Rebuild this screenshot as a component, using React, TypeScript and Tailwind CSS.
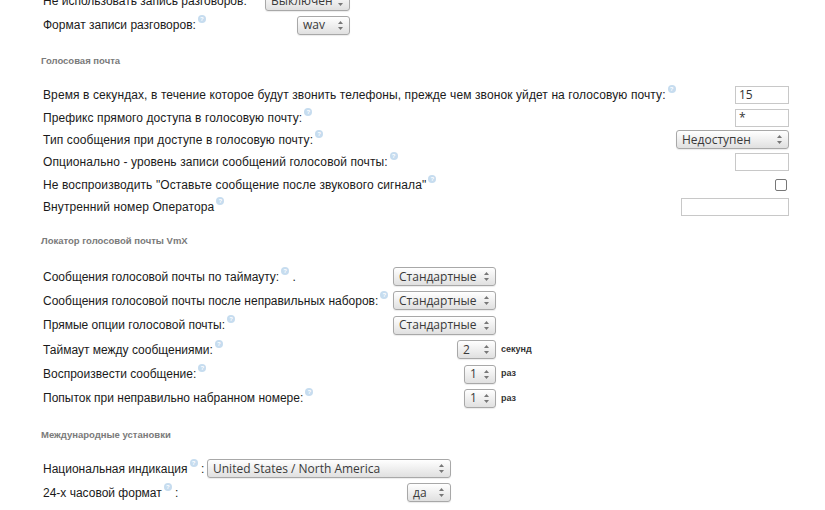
import React from 'react';

function Help() {
  return (
    <span className="inline-flex items-center justify-center w-[8px] h-[8px] rounded-full bg-[#c6dcef] text-white text-[6px] leading-none font-bold align-top ml-[2px] mt-[-1px]">
      ?
    </span>
  );
}

function Select({ value, width }: { value: string; width: number }) {
  return (
    <div
      className="relative h-[19px] rounded-[3px] border border-[#a8a8a8] bg-gradient-to-b from-white to-[#e0e0e0] shadow-[0_1px_1px_rgba(0,0,0,0.08)] flex items-center pl-[5px] text-[12px] text-[#3a3a3a] font-['Open_Sans',sans-serif] leading-none"
      style={{ width }}
    >
      <span>{value}</span>
      <span className="absolute right-[6px] top-[4px] flex flex-col items-center gap-[3px]">
        <svg width="5" height="3" viewBox="0 0 5 3">
          <path d="M2.5 0 L5 3 L0 3 Z" fill="#777" />
        </svg>
        <svg width="5" height="3" viewBox="0 0 5 3">
          <path d="M0 0 L5 0 L2.5 3 Z" fill="#777" />
        </svg>
      </span>
    </div>
  );
}

function TextInput({ value = '', width = 54 }: { value?: string; width?: number }) {
  return (
    <div
      className="h-[18px] border border-[#c8c8c8] bg-white flex items-center pl-[3px] text-[12px] text-[#333] font-['Open_Sans',sans-serif] leading-none"
      style={{ width }}
    >
      {value}
    </div>
  );
}

function SectionTitle({ children, className = '' }: { children: React.ReactNode; className?: string }) {
  return (
    <div className={`h-[12px] leading-[12px] text-[9.5px] font-bold text-[#7a7a7a] pl-[41px] ${className}`}>
      {children}
    </div>
  );
}

export default function App() {
  const voicemail = [
    {
      label: 'Время в секундах, в течение которое будут звонить телефоны, прежде чем звонок уйдет на голосовую почту:',
      control: <TextInput value="15" />,
    },
    { label: 'Префикс прямого доступа в голосовую почту:', control: <TextInput value="*" /> },
    { label: 'Тип сообщения при доступе в голосовую почту:', control: <Select value="Недоступен" width={113} /> },
    { label: 'Опционально - уровень записи сообщений голосовой почты:', control: <TextInput /> },
    {
      label: 'Не воспроизводить "Оставьте сообщение после звукового сигнала"',
      control: <div className="w-[12px] h-[12px] rounded-[2px] border border-[#777] bg-white mr-[2px]" />,
    },
    { label: 'Внутренний номер Оператора', control: <TextInput width={108} /> },
  ];

  const vmx = [
    { label: 'Сообщения голосовой почты по таймауту:', tail: ' .', control: <Select value="Стандартные" width={103} />, unit: '' },
    { label: 'Сообщения голосовой почты после неправильных наборов:', control: <Select value="Стандартные" width={103} />, unit: '' },
    { label: 'Прямые опции голосовой почты:', control: <Select value="Стандартные" width={103} />, unit: '' },
    { label: 'Таймаут между сообщениями:', control: <Select value="2" width={39} />, unit: 'секунд' },
    { label: 'Воспроизвести сообщение:', control: <Select value="1" width={32} />, unit: 'раз' },
    { label: 'Попыток при неправильно набранном номере:', control: <Select value="1" width={32} />, unit: 'раз' },
  ];

  return (
    <div className="w-[825px] h-[510px] overflow-hidden bg-white text-[12px] text-[#1a1a1a] font-['Liberation_Sans',Arial,sans-serif]">
      {/* Recording */}
      <div className="-mt-[11px] pl-[43px] w-[350px]">
        <div className="h-[24px] flex items-center">
          <span className="whitespace-nowrap">
            Не использовать запись разговоров:
            <Help />
          </span>
          <div className="ml-auto">
            <Select value="Выключен" width={85} />
          </div>
        </div>
        <div className="h-[24px] flex items-center">
          <span className="whitespace-nowrap">
            Формат записи разговоров:
            <Help />
          </span>
          <div className="ml-auto">
            <Select value="wav" width={53} />
          </div>
        </div>
      </div>

      <SectionTitle className="mt-[18px]">Голосовая почта</SectionTitle>

      <div className="mt-[17px] pl-[43px] w-[789px]">
        {voicemail.map((r, i) => (
          <div key={i} className="h-[22.4px] flex items-center">
            <span className="whitespace-nowrap tracking-[0.1px]">
              {r.label}
              <Help />
            </span>
            <div className="ml-auto">{r.control}</div>
          </div>
        ))}
      </div>

      <SectionTitle className="mt-[17px]">Локатор голосовой почты VmX</SectionTitle>

      <div className="mt-[17px] pl-[43px] w-[541px]">
        {vmx.map((r, i) => (
          <div key={i} className="h-[24.4px] flex items-center">
            <span className="whitespace-nowrap">
              {r.label}
              <Help />
              {r.tail}
            </span>
            <div className="ml-auto">{r.control}</div>
            <div className="w-[45px] shrink-0 pl-[5px] text-[9px] font-bold text-[#333]">{r.unit}</div>
          </div>
        ))}
      </div>

      <SectionTitle className="mt-[18px]">Международные установки</SectionTitle>

      <div className="mt-[16px] pl-[43px] w-[451px]">
        <div className="h-[24px] flex items-center">
          <span className="whitespace-nowrap">
            Национальная индикация
            <Help /> :
          </span>
          <div className="ml-auto">
            <Select value="United States / North America" width={244} />
          </div>
        </div>
        <div className="h-[24px] flex items-center">
          <span className="whitespace-nowrap">
            24-х часовой формат
            <Help /> :
          </span>
          <div className="ml-auto">
            <Select value="да" width={44} />
          </div>
        </div>
      </div>
    </div>
  );
}
